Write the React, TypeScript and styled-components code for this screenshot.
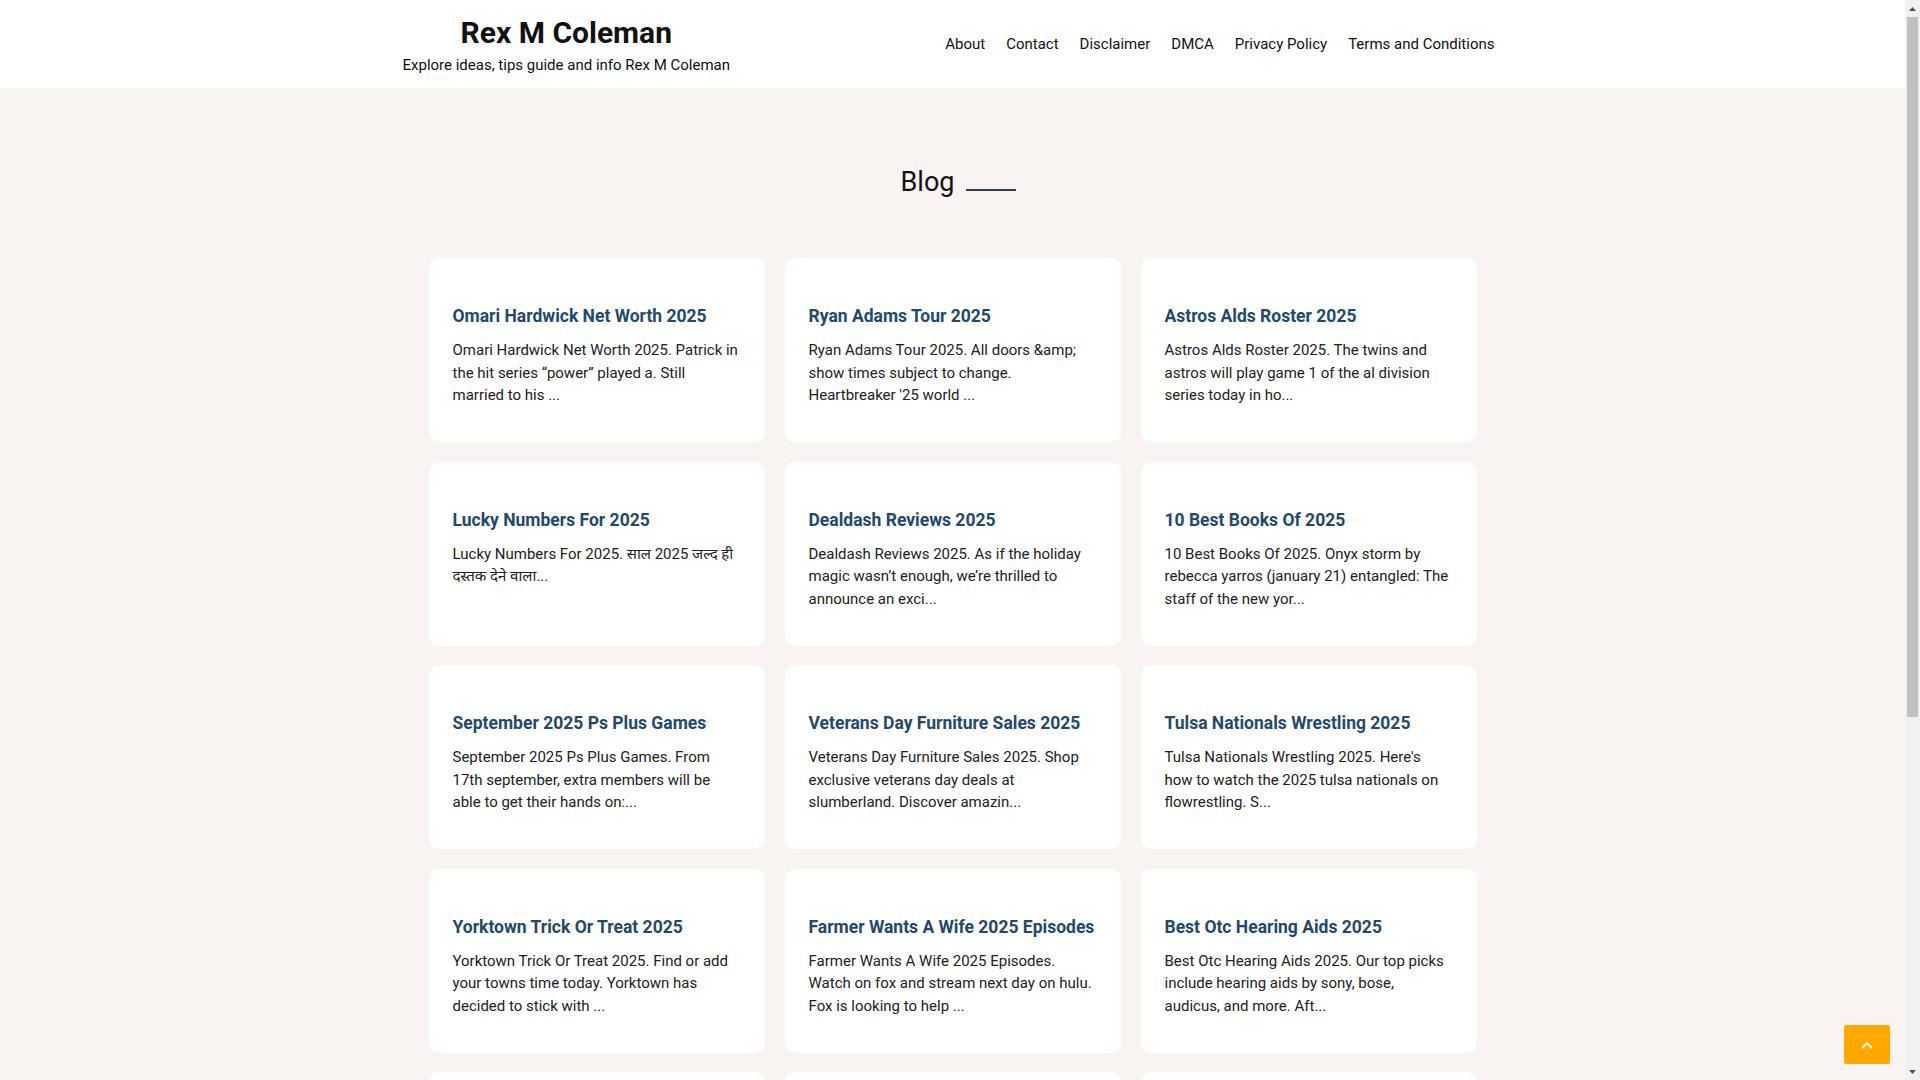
import styled, { createGlobalStyle } from 'styled-components';

interface Post {
  title: string;
  excerpt: string;
}

const posts: Post[] = [
  {
    title: 'Omari Hardwick Net Worth 2025',
    excerpt:
      'Omari Hardwick Net Worth 2025. Patrick in the hit series “power” played a. Still married to his ...',
  },
  {
    title: 'Ryan Adams Tour 2025',
    excerpt:
      "Ryan Adams Tour 2025. All doors &amp; show times subject to change. Heartbreaker '25 world ...",
  },
  {
    title: 'Astros Alds Roster 2025',
    excerpt:
      'Astros Alds Roster 2025. The twins and astros will play game 1 of the al division series today in ho...',
  },
  {
    title: 'Lucky Numbers For 2025',
    excerpt: 'Lucky Numbers For 2025. साल 2025 जल्द ही दस्तक देने वाला...',
  },
  {
    title: 'Dealdash Reviews 2025',
    excerpt:
      'Dealdash Reviews 2025. As if the holiday magic wasn’t enough, we’re thrilled to announce an exci...',
  },
  {
    title: '10 Best Books Of 2025',
    excerpt:
      '10 Best Books Of 2025. Onyx storm by rebecca yarros (january 21) entangled: The staff of the new yor...',
  },
  {
    title: 'September 2025 Ps Plus Games',
    excerpt:
      'September 2025 Ps Plus Games. From 17th september, extra members will be able to get their hands on:...',
  },
  {
    title: 'Veterans Day Furniture Sales 2025',
    excerpt:
      'Veterans Day Furniture Sales 2025. Shop exclusive veterans day deals at slumberland. Discover amazin...',
  },
  {
    title: 'Tulsa Nationals Wrestling 2025',
    excerpt:
      "Tulsa Nationals Wrestling 2025. Here's how to watch the 2025 tulsa nationals on flowrestling. S...",
  },
  {
    title: 'Yorktown Trick Or Treat 2025',
    excerpt:
      'Yorktown Trick Or Treat 2025. Find or add your towns time today. Yorktown has decided to stick with ...',
  },
  {
    title: 'Farmer Wants A Wife 2025 Episodes',
    excerpt:
      'Farmer Wants A Wife 2025 Episodes. Watch on fox and stream next day on hulu. Fox is looking to help ...',
  },
  {
    title: 'Best Otc Hearing Aids 2025',
    excerpt:
      'Best Otc Hearing Aids 2025. Our top picks include hearing aids by sony, bose, audicus, and more. Aft...',
  },
  {
    title: 'Holiday Calendar 2025',
    excerpt:
      'Holiday Calendar 2025. Plan ahead with the complete list of public holidays and observances for the ye...',
  },
  {
    title: 'Nfl Draft Order 2025',
    excerpt:
      'Nfl Draft Order 2025. The full first round order is set after the regular season wrapped up this we...',
  },
  {
    title: 'Best Budget Phones 2025',
    excerpt:
      'Best Budget Phones 2025. We tested dozens of affordable handsets to find the ones worth your mon...',
  },
];

const navLinks = ['About', 'Contact', 'Disclaimer', 'DMCA', 'Privacy Policy', 'Terms and Conditions'];

// keep 15px free on the right for the scrollbar gutter
const GlobalStyle = createGlobalStyle`
  * {
    box-sizing: border-box;
  }
  html {
    background: #f9f4f1;
  }
  body {
    margin: 0 15px 0 0;
    background: #f9f4f1;
    font-family: Roboto, "Noto Sans", "Liberation Sans", sans-serif;
    color: #111;
  }
  a {
    color: inherit;
    text-decoration: none;
  }
`;

const Arrow = ({ up }: { up?: boolean }) => (
  <svg width="7" height="4" viewBox="0 0 7 4">
    <path d={up ? 'M0 4L3.5 0L7 4Z' : 'M0 0L3.5 4L7 0Z'} fill="#505050" />
  </svg>
);

export default function App() {
  return (
    <>
      <GlobalStyle />
      <Header>
        <HeaderInner>
          <Brand>
            <SiteTitle href="#">Rex M Coleman</SiteTitle>
            <Tagline>Explore ideas, tips guide and info Rex M Coleman</Tagline>
          </Brand>
          <Nav>
            {navLinks.map((link) => (
              <NavLink key={link} href="#">
                {link}
              </NavLink>
            ))}
          </Nav>
        </HeaderInner>
      </Header>

      <Main>
        <PageHeading>
          <HeadingText>Blog</HeadingText>
          <HeadingLine />
        </PageHeading>

        <Grid>
          {posts.map((post) => (
            <Card key={post.title}>
              <CardTitle href="#">{post.title}</CardTitle>
              <Excerpt>{post.excerpt}</Excerpt>
            </Card>
          ))}
        </Grid>
      </Main>

      <Footer>
        <FooterText>Copyright © 2025 Rex M Coleman</FooterText>
      </Footer>

      <BackToTop aria-label="Back to top">
        <svg width="12" height="8" viewBox="0 0 12 8" fill="none">
          <path d="M1 7l5-5 5 5" stroke="#fff" strokeWidth="1.8" />
        </svg>
      </BackToTop>

      <ScrollTrack>
        <ScrollButton>
          <Arrow up />
        </ScrollButton>
        <ScrollThumb />
        <ScrollButton>
          <Arrow />
        </ScrollButton>
      </ScrollTrack>
    </>
  );
}

const Header = styled.header`
  background: #fff;
  height: 88px;
`;

const HeaderInner = styled.div`
  display: flex;
  justify-content: space-between;
  align-items: flex-start;
  width: 1100px;
  margin: 0 auto;
  padding: 0 8px 0 0;
`;

const Brand = styled.div`
  display: flex;
  flex-direction: column;
  align-items: center;
  padding-top: 15px;
`;

const SiteTitle = styled.a`
  font-size: 30px;
  font-weight: 700;
  color: #111;
  margin-bottom: 6px;
`;

const Tagline = styled.span`
  font-size: 15px;
  color: #111;
`;

const Nav = styled.nav`
  display: flex;
  gap: 21px;
  margin-top: 35px;
`;

const NavLink = styled.a`
  font-size: 15px;
  color: #111;
`;

const Main = styled.main`
  width: 1048px;
  margin: 0 auto;
  padding: 78px 0 40px;
`;

const PageHeading = styled.div`
  display: flex;
  justify-content: center;
  align-items: flex-end;
  padding-left: 12px;
  margin-bottom: 60px;
`;

const HeadingText = styled.h1`
  margin: 0;
  font-size: 27px;
  font-weight: 400;
  line-height: normal;
  color: #111;
`;

const HeadingLine = styled.span`
  width: 50px;
  height: 2px;
  background: #2c3e50;
  margin: 0 0 7px 12px;
`;

const Grid = styled.div`
  display: grid;
  grid-template-columns: repeat(3, 336px);
  column-gap: 20px;
  row-gap: 19.6px;
`;

const Card = styled.article`
  background: #fff;
  border-radius: 10px;
  min-height: 184px;
  padding: 48px 24px 34px;
`;

const CardTitle = styled.a`
  display: block;
  font-size: 17.5px;
  font-weight: 700;
  line-height: normal;
  color: #23496b;
  margin-bottom: 13px;
`;

const Excerpt = styled.p`
  margin: 0;
  padding-right: 1.2px;
  font-size: 15px;
  line-height: 22.5px;
  color: #222;
`;

const Footer = styled.footer`
  background: #fff;
  padding: 30px 0;
  text-align: center;
`;

const FooterText = styled.span`
  font-size: 14px;
  color: #444;
`;

const BackToTop = styled.button`
  position: fixed;
  right: 30px;
  bottom: 16px;
  width: 46px;
  height: 39px;
  border: none;
  border-radius: 2px;
  background: #ffa900;
  display: flex;
  align-items: center;
  justify-content: center;
  cursor: pointer;
  padding: 0;
`;

const ScrollTrack = styled.div`
  position: fixed;
  top: 0;
  right: 0;
  bottom: 0;
  width: 15px;
  background: #f1f1f1;
  display: flex;
  flex-direction: column;
  justify-content: space-between;
`;

const ScrollButton = styled.div`
  height: 17px;
  display: flex;
  align-items: center;
  justify-content: center;
`;

const ScrollThumb = styled.div`
  flex: 0 0 700px;
  margin: 0 2px auto;
  background: #c1c1c1;
`;
